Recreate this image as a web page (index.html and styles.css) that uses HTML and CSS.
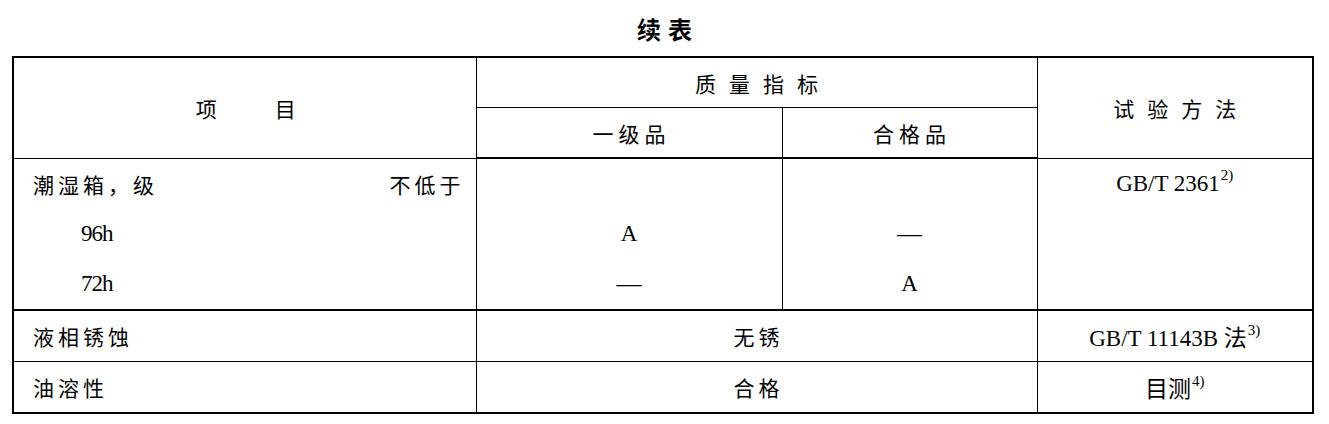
FILE: index.html
```html
<!DOCTYPE html>
<html lang="zh-CN">
<head>
<meta charset="utf-8">
<title>续表</title>
<link rel="stylesheet" href="styles.css">
</head>
<body>
<div class="page">
  <div class="title">续表</div>
  <table class="spec">
    <colgroup>
      <col class="c-item">
      <col class="c-first">
      <col class="c-pass">
      <col class="c-method">
    </colgroup>
    <thead>
      <tr class="h1">
        <th rowspan="2" class="hd-item"><span class="w">项</span><span class="w">目</span></th>
        <th colspan="2" class="wide">质量指标</th>
        <th rowspan="2" class="wide">试验方法</th>
      </tr>
      <tr class="h2">
        <th class="grade">一级品</th>
        <th class="grade">合格品</th>
      </tr>
    </thead>
    <tbody>
      <tr class="b-top">
        <td class="item split"><span>潮湿箱，级</span><span class="right">不低于</span></td>
        <td></td>
        <td></td>
        <td class="ctr">GB/T 2361<sup>2)</sup></td>
      </tr>
      <tr class="b-mid">
        <td class="item sub">96h</td>
        <td class="ctr">A</td>
        <td class="ctr dash">—</td>
        <td></td>
      </tr>
      <tr class="b-end">
        <td class="item sub">72h</td>
        <td class="ctr dash">—</td>
        <td class="ctr">A</td>
        <td></td>
      </tr>
      <tr class="r-mid">
        <td class="item">液相锈蚀</td>
        <td colspan="2" class="ctr cjk">无锈</td>
        <td class="ctr">GB/T 11143B 法<sup>3)</sup></td>
      </tr>
      <tr class="r-last">
        <td class="item">油溶性</td>
        <td colspan="2" class="ctr cjk">合格</td>
        <td class="ctr">目测<sup>4)</sup></td>
      </tr>
    </tbody>
  </table>
</div>
</body>
</html>
```

FILE: styles.css
```css
html, body {
  margin: 0;
  padding: 0;
  background: #fff;
}

.page {
  width: 1329px;
  height: 424px;
  color: #000;
  font-family: "Liberation Serif", "Noto Sans CJK SC", serif;
}

.title {
  box-sizing: border-box;
  height: 56px;
  padding-top: 16px;
  padding-left: 7px;
  text-align: center;
  font-family: "Noto Sans CJK SC", sans-serif;
  font-weight: 700;
  font-size: 24px;
  line-height: 26px;
  letter-spacing: 7px;
}

.spec {
  margin-left: 12px;
  width: 1302px;
  table-layout: fixed;
  border-collapse: collapse;
  border: 2px solid #000;
}

.c-item { width: 463px; }
.c-first { width: 306px; }
.c-pass { width: 255px; }
.c-method { width: 276px; }

.spec th,
.spec td {
  border: 1px solid #000;
  padding: 0;
  font-weight: 400;
  font-size: 21px;
  letter-spacing: 4px;
  vertical-align: middle;
  white-space: nowrap;
}

.spec th {
  text-align: center;
  font-family: "Noto Sans CJK SC", sans-serif;
}

.spec .h1 th { height: 49px; }
.spec .h2 th { height: 49px; border-bottom: 2px solid #000; }

.spec .grade {
  letter-spacing: 5px;
  padding-left: 5px;
}

.spec .hd-item { letter-spacing: 0; padding-left: 2px; }
.hd-item .w + .w { margin-left: 58px; }

.spec .wide {
  letter-spacing: 13px;
  padding-left: 13px;
}

.spec td { height: 50px; }

.spec .b-top td { border-bottom: none; }
.spec .b-mid td { border-top: none; border-bottom: none; }
.spec .b-end td { border-top: none; border-bottom: 2px solid #000; }

.spec .item {
  padding-left: 19px;
  text-align: left;
}

.spec .split {
  padding-right: 11px;
}

.split .right {
  float: right;
}

.spec .sub {
  padding-left: 67px;
  font-size: 23px;
  letter-spacing: -1px;
}

.spec .ctr {
  text-align: center;
  font-size: 23px;
  letter-spacing: 0;
}

.spec .dash {
  font-size: 25px;
}

.spec .cjk {
  font-size: 21px;
  letter-spacing: 4px;
  padding-left: 4px;
}

sup {
  font-size: 15px;
  line-height: 0;
  vertical-align: 11px;
  letter-spacing: 0;
  margin-left: 1px;
}
```
